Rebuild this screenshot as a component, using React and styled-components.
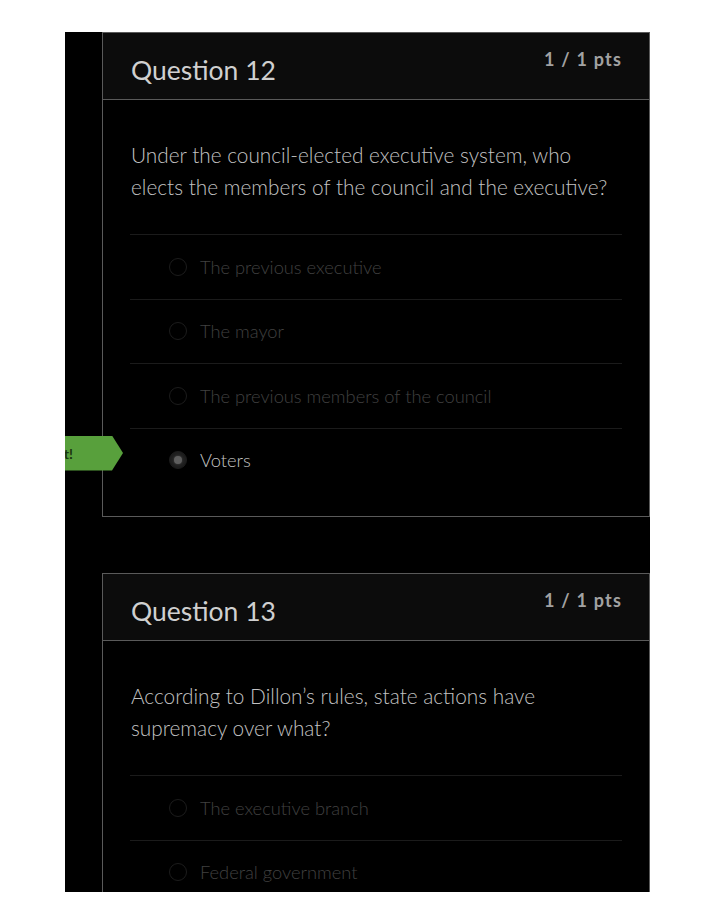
import React from "react";
import styled, { createGlobalStyle } from "styled-components";

const GlobalStyle = createGlobalStyle`
  html, body { margin: 0; padding: 0; background: #ffffff; }
  body { font-family: Lato, "Open Sans", "Liberation Sans", sans-serif; }
  * { box-sizing: border-box; }
`;

const Page = styled.div`
  padding: 32px 0 26px 65px;
`;

const Screen = styled.div`
  width: 585px;
  height: 860px;
  background: #000;
  overflow: hidden;
  padding-left: 37px;
  display: flex;
  flex-direction: column;
  gap: 56px;
`;

const Card = styled.section`
  flex: none;
  width: 548px;
  border: 1px solid #5a5a5a;
  background: #000;
`;

const Header = styled.header`
  height: 67px;
  background: #0c0c0c;
  border-bottom: 1px solid #5a5a5a;
  display: flex;
  justify-content: space-between;
  align-items: flex-start;
  padding: 0 27px 0 28px;
`;

const Title = styled.h2`
  margin: 22px 0 0;
  font-size: 26.5px;
  line-height: 30px;
  font-weight: 400;
  color: #d0d0d0;
`;

const Points = styled.div`
  margin-top: 16px;
  font-size: 18px;
  line-height: 20px;
  font-weight: 700;
  letter-spacing: 1.2px;
  color: #a2a2a2;
`;

const Body = styled.div`
  padding: 39px 27px 24px 27px;
`;

const QuestionText = styled.p`
  margin: 0 0 31px 1px;
  font-size: 20.8px;
  line-height: 32px;
  font-weight: 300;
  color: #c2c2c2;
`;

const Answers = styled.ul`
  list-style: none;
  margin: 0;
  padding: 0;
`;

const Answer = styled.li`
  position: relative;
  display: flex;
  align-items: center;
  gap: 13px;
  min-height: 64.5px;
  padding-left: 39px;
  border-top: 1px solid #1b1b1b;
  font-size: 18.3px;
  font-weight: 300;
  color: ${(p) => (p.$selected ? "#c4c4c4" : "#404040")};
`;

const Radio = styled.span`
  flex: none;
  width: 18px;
  height: 18px;
  border-radius: 50%;
  border: 1.5px solid #1c1c1c;
  background: ${(p) => (p.$selected ? "#1e1e1e" : "transparent")};
  display: flex;
  align-items: center;
  justify-content: center;
  &::after {
    content: "";
    display: ${(p) => (p.$selected ? "block" : "none")};
    width: 8px;
    height: 8px;
    border-radius: 50%;
    background: #5e5e5e;
    box-shadow: 0 0 3px #4a4a4a;
  }
`;

const Flag = styled.div`
  position: absolute;
  left: -115px;
  top: 7px;
  width: 108px;
  height: 35px;
  background: #58a03c;
  clip-path: polygon(0 0, 97px 0, 100% 50%, 97px 100%, 0 100%);
  display: flex;
  align-items: center;
  justify-content: flex-end;
  padding-right: 50px;
  font-size: 14px;
  font-weight: 700;
  color: #1a3410;
  white-space: nowrap;
`;

const questions = [
  {
    title: "Question 12",
    pts: "1 / 1 pts",
    text: "Under the council-elected executive system, who elects the members of the council and the executive?",
    answers: [
      { label: "The previous executive" },
      { label: "The mayor" },
      { label: "The previous members of the council" },
      { label: "Voters", selected: true, correct: true },
    ],
  },
  {
    title: "Question 13",
    pts: "1 / 1 pts",
    text: "According to Dillon\u2019s rules, state actions have supremacy over what?",
    answers: [
      { label: "The executive branch" },
      { label: "Federal government" },
    ],
  },
];

export default function App() {
  return (
    <>
      <GlobalStyle />
      <Page>
        <Screen>
          {questions.map((q) => (
            <Card key={q.title}>
              <Header>
                <Title>{q.title}</Title>
                <Points>{q.pts}</Points>
              </Header>
              <Body>
                <QuestionText>{q.text}</QuestionText>
                <Answers>
                  {q.answers.map((a) => (
                    <Answer key={a.label} $selected={a.selected}>
                      {a.correct && <Flag>Correct!</Flag>}
                      <Radio $selected={a.selected} />
                      <span>{a.label}</span>
                    </Answer>
                  ))}
                </Answers>
              </Body>
            </Card>
          ))}
        </Screen>
      </Page>
    </>
  );
}
